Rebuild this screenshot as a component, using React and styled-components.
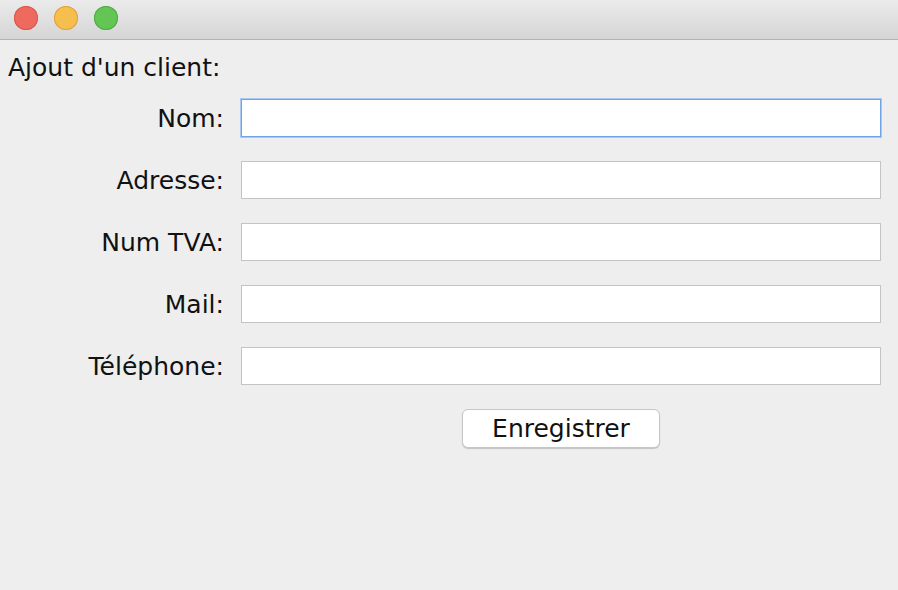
import React from 'react'
import styled, { createGlobalStyle } from 'styled-components'

const GlobalStyle = createGlobalStyle`
  html, body {
    margin: 0;
    padding: 0;
    background: #eeeeee;
  }
  body {
    font-family: 'DejaVu Sans', 'Liberation Sans', sans-serif;
    color: #111;
  }
`

const Window = styled.div`
  width: 898px;
  height: 590px;
  display: flex;
  flex-direction: column;
  background: #eeeeee;
  overflow: hidden;
`

const TitleBar = styled.div`
  flex: none;
  height: 40px;
  display: flex;
  align-items: center;
  gap: 16px;
  padding: 0 0 0 14px;
  background: linear-gradient(#ebebeb, #d5d5d5);
  border-bottom: 1px solid #b4b4b4;
  box-sizing: border-box;
`

const Light = styled.span`
  width: 24px;
  height: 24px;
  border-radius: 50%;
  background: ${p => p.$color};
  box-shadow: inset 0 0 0 1px ${p => p.$edge};
  margin-top: -4px;
`

const Body = styled.div`
  display: flex;
  flex-direction: column;
  padding: 12px 17px 0 8px;
`

const Heading = styled.div`
  font-size: 25px;
  height: 47px;
  line-height: 32px;
`

const Form = styled.div`
  display: grid;
  grid-template-columns: 216px 640px;
  column-gap: 17px;
  row-gap: 24px;
  align-items: center;
`

const Label = styled.label`
  font-size: 25px;
  text-align: right;
`

const Field = styled.input`
  box-sizing: border-box;
  height: 38px;
  width: 640px;
  margin: 0;
  background: #fff;
  border: 1px solid ${p => (p.$focused ? '#6fa3e6' : '#c4c4c4')};
  box-shadow: ${p => (p.$focused ? '0 0 0 1px #a9c8f2' : 'none')};
  outline: none;
  font-size: 20px;
  font-family: inherit;
`

const Button = styled.button`
  grid-column: 2;
  justify-self: center;
  width: 198px;
  height: 39px;
  background: #fff;
  border: 1px solid #c6c6c6;
  border-radius: 6px;
  box-shadow: 0 1px 1px rgba(0, 0, 0, 0.18);
  font-family: inherit;
  font-size: 25px;
  color: #111;
  padding: 0;
`

const fields = ['Nom', 'Adresse', 'Num TVA', 'Mail', 'Téléphone']

const App = () => {
  return (
    <Window>
      <GlobalStyle />
      <TitleBar>
        <Light $color='#ee6a5f' $edge='#d9564b' />
        <Light $color='#f5be4f' $edge='#dea23a' />
        <Light $color='#62c554' $edge='#4dab42' />
      </TitleBar>
      <Body>
        <Heading>Ajout d'un client:</Heading>
        <Form>
          {fields.map((name, index) => (
            <React.Fragment key={index}>
              <Label>{name}:</Label>
              <Field $focused={index === 0} />
            </React.Fragment>
          ))}
          <Button>Enregistrer</Button>
        </Form>
      </Body>
    </Window>
  )
}

export default App
